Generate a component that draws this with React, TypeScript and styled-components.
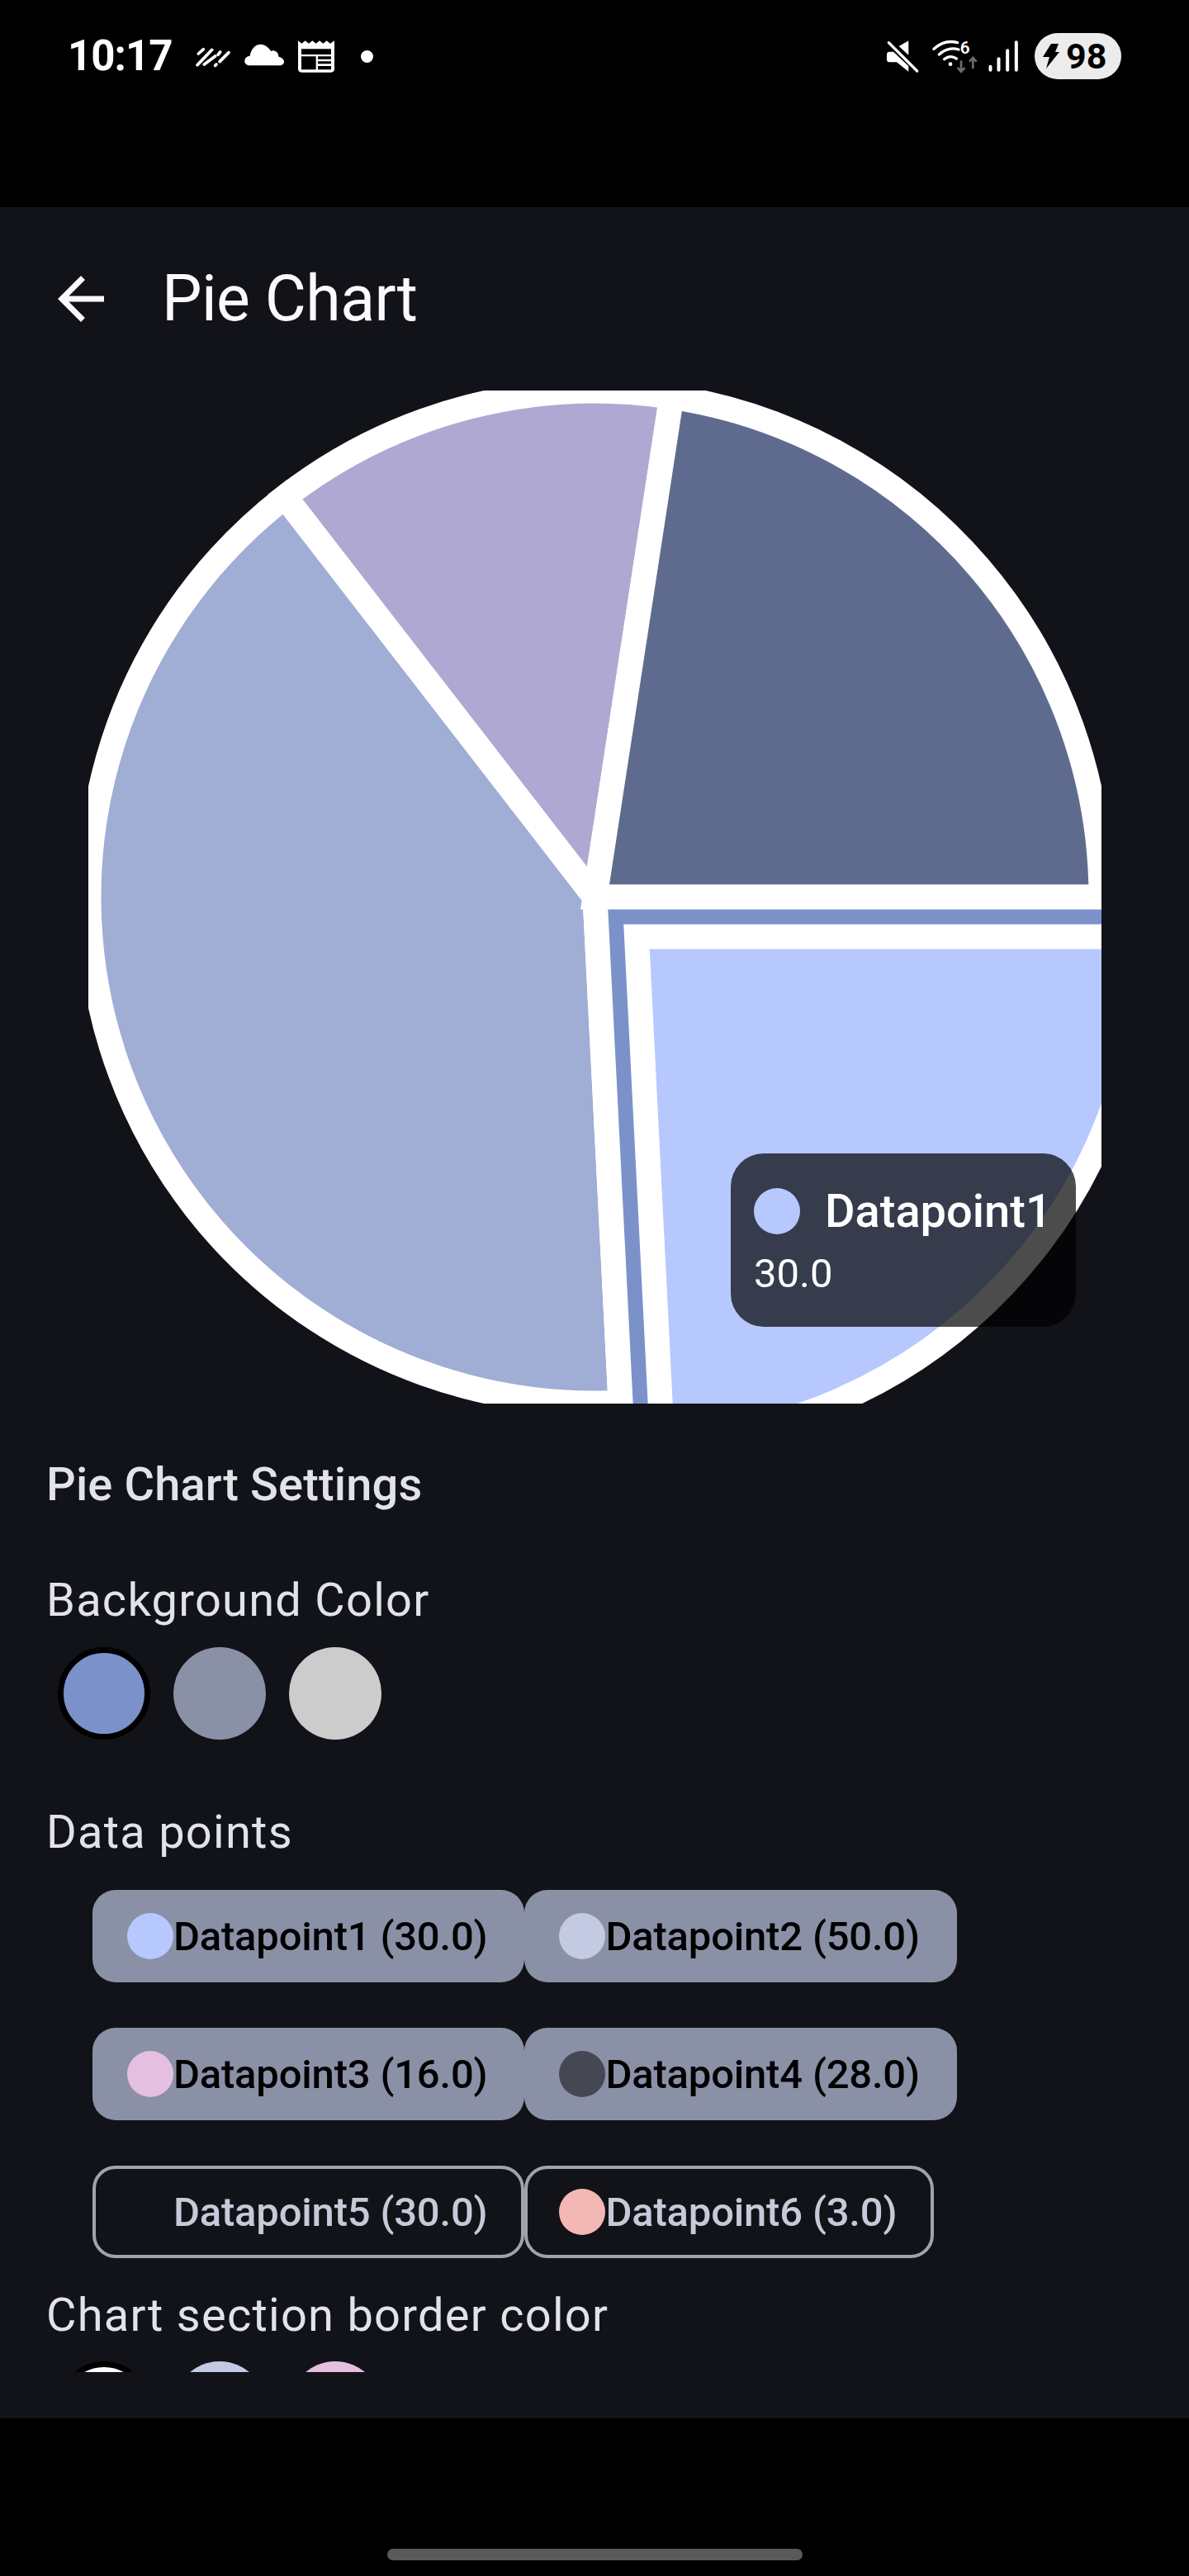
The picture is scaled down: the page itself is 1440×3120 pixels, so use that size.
import styled, { createGlobalStyle } from 'styled-components';

const GlobalStyle = createGlobalStyle`
  html, body {
    margin: 0;
    background: #000;
    font-family: Roboto, "Liberation Sans", sans-serif;
  }
`

const Screen = styled.div`
  width: 1440px;
  height: 3120px;
  display: flex;
  flex-direction: column;
  background: #000;
`

const StatusBar = styled.div`
  height: 136px;
  margin-bottom: 115px;
  padding: 0 82px 0 82px;
  display: flex;
  align-items: center;
  justify-content: space-between;
  color: #fff;
`

const StatusGroup = styled.div`
  display: flex;
  align-items: center;
`

const Time = styled.span`
  width: 128px;
  font-size: 51px;
  font-weight: 700;
  letter-spacing: -1px;
  line-height: 60px;
`

const StatusIcon = styled.svg<{ $left: number }>`
  display: block;
  height: 40px;
  margin-left: ${p => p.$left}px;
  fill: #fff;
  overflow: visible;
`

const NoticeDot = styled.span`
  width: 15px;
  height: 15px;
  margin-left: 32px;
  border-radius: 50%;
  background: #fff;
`

const Battery = styled.div`
  width: 105px;
  height: 56px;
  margin-left: 19px;
  padding-left: 10px;
  box-sizing: border-box;
  display: flex;
  align-items: center;
  border-radius: 28px;
  background: #ececec;
  color: #000;
  font-size: 43px;
  font-weight: 700;
`

const BatteryBolt = styled.svg`
  width: 20px;
  height: 30px;
  margin-right: 8px;
  fill: #000;
`

const Panel = styled.div`
  height: 2678px;
  background: #111318;
`

const Scroller = styled.div`
  height: 2622px;
  overflow: hidden;
`

const TopBar = styled.div`
  height: 222px;
  padding-left: 56px;
  display: flex;
  align-items: center;
`

const BackIcon = styled.svg`
  width: 84px;
  height: 84px;
  fill: #fcf8ff;
`

const Title = styled.h1`
  margin: 0 0 0 56px;
  font-size: 77px;
  font-weight: 400;
  letter-spacing: -0.6px;
  line-height: 98px;
  color: #fcf8ff;
`

const ChartBox = styled.div`
  position: relative;
  width: 1227px;
  height: 1227px;
  margin-left: 107px;
  overflow: hidden;
`

const ChartSvg = styled.svg`
  display: block;
  width: 1227px;
  height: 1227px;
`

const Tooltip = styled.div`
  position: absolute;
  left: 778px;
  top: 924px;
  width: 418px;
  height: 210px;
  padding: 42px 0 0 28px;
  box-sizing: border-box;
  border-radius: 40px;
  background: rgba(0, 0, 0, 0.7);
  color: #fff;
`

const TooltipRow = styled.div`
  display: flex;
  align-items: center;
  gap: 30px;
  font-size: 56px;
  font-weight: 500;
  line-height: 56px;
`

const TooltipValue = styled.div`
  margin-top: 13px;
  font-size: 49px;
  line-height: 70px;
`

const Dot = styled.span<{ $color: string }>`
  flex: none;
  width: 56px;
  height: 56px;
  border-radius: 50%;
  background: ${p => p.$color};
`

const Settings = styled.div`
  padding-left: 56px;
  color: #e2e2e9;
`

const Heading = styled.h2`
  margin: 56px 0 0;
  font-size: 56px;
  font-weight: 500;
  line-height: 84px;
  letter-spacing: 0.15px;
`

const Label = styled.div<{ $top: number }>`
  margin-top: ${p => p.$top}px;
  font-size: 56px;
  line-height: 84px;
  letter-spacing: 1.25px;
`

const SwatchRow = styled.div<{ $top: number }>`
  display: flex;
  gap: 28px;
  margin: ${p => p.$top}px 0 0 14px;
`

const Swatch = styled.div<{ $color: string; $selected?: boolean }>`
  width: 112px;
  height: 112px;
  box-sizing: border-box;
  border-radius: 50%;
  background: ${p => p.$color};
  border: ${p => (p.$selected ? '7px solid #000' : 'none')};
`

const ChipFlow = styled.div`
  display: flex;
  flex-wrap: wrap;
  row-gap: 55px;
  width: 1216px;
  margin: 28px 0 0 56px;
`

const Chip = styled.div<{ $on: boolean }>`
  height: 112px;
  padding: ${p => (p.$on ? '0 45px 0 42px' : '0 41px 0 38px')};
  box-sizing: border-box;
  display: flex;
  align-items: center;
  border-radius: 28px;
  background: ${p => (p.$on ? '#8a90a6' : 'transparent')};
  border: ${p => (p.$on ? 'none' : '4px solid #a2a2ad')};
  color: ${p => (p.$on ? '#000' : '#c8c9d8')};
  font-size: 49px;
  font-weight: 500;
  letter-spacing: -0.2px;
`

const NavArea = styled.div`
  height: 191px;
  padding-top: 158px;
  box-sizing: border-box;
  display: flex;
  justify-content: center;
`

const NavPill = styled.div`
  width: 503px;
  height: 14px;
  border-radius: 7px;
  background: #5a5a5a;
`

const chips = [
  { name: 'Datapoint1', value: '30.0', color: '#b7c8ff', on: true },
  { name: 'Datapoint2', value: '50.0', color: '#c5cae3', on: true },
  { name: 'Datapoint3', value: '16.0', color: '#e5bfe0', on: true },
  { name: 'Datapoint4', value: '28.0', color: '#454852', on: true },
  { name: 'Datapoint5', value: '30.0', color: 'transparent', on: false },
  { name: 'Datapoint6', value: '3.0', color: '#f4b8b4', on: false },
]

const slicePath = (cx: number, cy: number, r: number, from: number, to: number) => {
  const a = (from * Math.PI) / 180
  const b = (to * Math.PI) / 180
  const large = to - from > 180 ? 1 : 0
  return `M${cx} ${cy}L${cx + r * Math.cos(a)} ${cy + r * Math.sin(a)}A${r} ${r} 0 ${large} 1 ${cx + r * Math.cos(b)} ${cy + r * Math.sin(b)}Z`
}

const total = 124
const angle = (v: number) => (v / total) * 360
const a1 = angle(30)
const a2 = a1 + angle(50)
const a3 = a2 + angle(16)

const PieChart = () => (
  <ChartSvg viewBox="0 0 1227 1227">
    <g stroke="#fff" strokeWidth={30}>
      <path d={slicePath(613.5, 613.5, 613, a1, a2)} fill="#a0add5" />
      <path d={slicePath(613.5, 613.5, 613, a2, a3)} fill="#afa8d3" />
      <path d={slicePath(613.5, 613.5, 613, a3, 360)} fill="#5f6b8e" />
      <path d={slicePath(613.5, 613.5, 640, 0, a1)} fill="#7a92c9" />
      <path d={slicePath(664, 661.5, 613, 0, a1)} fill="#b7c8ff" />
    </g>
  </ChartSvg>
)

const App = () => (
  <Screen>
    <GlobalStyle />
    <StatusBar>
      <StatusGroup>
        <Time>10:17</Time>
        <StatusIcon $left={27} viewBox="21 24 126 120" width={42}>
          <g stroke="#fff" strokeWidth={11} strokeLinecap="round" fill="none">
            <path d="M31 75L49 59" />
            <path d="M27 116L80 61" />
            <path d="M52 114L92 84" />
            <path d="M102 79L110 69" />
            <path d="M92 118L96 114" />
            <path d="M108 104L141 71" />
          </g>
        </StatusIcon>
        <StatusIcon $left={17} viewBox="198 24 144 120" width={48}>
          <path d="M218 118C205 118 198 110 199 100C200 90 208 84 218 83C222 58 238 40 258 41C275 42 288 55 295 66C302 62 312 64 318 72C322 78 322 84 322 86C333 88 342 96 342 104C342 112 334 118 325 118Z" />
        </StatusIcon>
        <StatusIcon $left={17} viewBox="395 24 132 120" width={44}>
          <path
            fillRule="evenodd"
            d="M395 28L408 38L421 28L434 38L447 28L460 38L473 28L486 38L499 28L512 38L527 28V130Q527 143 514 143H408Q395 143 395 130ZM407 58V78H515V58ZM407 85V133H460V85ZM467 85V95H515V85ZM467 103V112H515V103ZM467 120V133H515V120Z"
          />
        </StatusIcon>
        <NoticeDot />
      </StatusGroup>
      <StatusGroup>
        <StatusIcon $left={0} viewBox="23 36 120 120" width={40}>
          <path d="M105 40V92L70 60Z" />
          <path d="M36 80H50L105 132V152L62 118H36Q26 118 26 108V90Q26 80 36 80Z" />
          <path d="M33 47L136 150" stroke="#fff" strokeWidth={10} strokeLinecap="round" />
        </StatusIcon>
        <StatusIcon $left={17} viewBox="195 36 165 120" width={55}>
          <g stroke="#fff" strokeWidth={10} strokeLinecap="round" fill="none">
            <path d="M198 70Q238 34 284 47" />
            <path d="M217 90Q250 60 288 72" />
            <path d="M236 107Q258 90 280 105" />
          </g>
          <circle cx={258} cy={125} r={7} />
          <text x={293} y={87} fontSize={62} fontWeight={600} fontFamily="Roboto, sans-serif" fill="#fff">6</text>
          <g stroke="#6b6b6b" strokeWidth={8} fill="none">
            <path d="M297 112V150M284 138L297 152L310 138" />
            <path d="M340 142V104M327 116L340 102L353 116" />
          </g>
        </StatusIcon>
        <StatusIcon $left={12} viewBox="396 36 110 120" width={37}>
          <rect x={397} y={128} width={12} height={24} rx={6} />
          <rect x={427} y={100} width={12} height={52} rx={6} />
          <rect x={459} y={70} width={12} height={82} rx={6} />
          <rect x={491} y={40} width={12} height={112} rx={6} />
        </StatusIcon>
        <Battery>
          <BatteryBolt viewBox="0 0 20 30">
            <path d="M10 0H19L15 10H20L4 30L8 16H0Z" />
          </BatteryBolt>
          98
        </Battery>
      </StatusGroup>
    </StatusBar>

    <Panel>
      <Scroller>
        <TopBar>
          <BackIcon viewBox="0 0 24 24">
            <path d="M20 11H7.83l5.59-5.59L12 4l-8 8 8 8 1.41-1.41L7.83 13H20v-2z" />
          </BackIcon>
          <Title>Pie Chart</Title>
        </TopBar>

        <ChartBox>
          <PieChart />
          <Tooltip>
            <TooltipRow>
              <Dot $color="#b7c8ff" />
              Datapoint1
            </TooltipRow>
            <TooltipValue>30.0</TooltipValue>
          </Tooltip>
        </ChartBox>

        <Settings>
          <Heading>Pie Chart Settings</Heading>
          <Label $top={56}>Background Color</Label>
          <SwatchRow $top={15}>
            <Swatch $color="#7a92c9" $selected />
            <Swatch $color="#8a90a6" />
            <Swatch $color="#cccccc" />
          </SwatchRow>
          <Label $top={70}>Data points</Label>
          <ChipFlow>
            {chips.map(c => (
              <Chip key={c.name} $on={c.on}>
                <Dot $color={c.color} />
                {c.name} ({c.value})
              </Chip>
            ))}
          </ChipFlow>
          <Label $top={27}>Chart section border color</Label>
          <SwatchRow $top={14}>
            <Swatch $color="#fff" $selected />
            <Swatch $color="#c5cae3" />
            <Swatch $color="#e5bfe0" />
          </SwatchRow>
        </Settings>
      </Scroller>
    </Panel>

    <NavArea>
      <NavPill />
    </NavArea>
  </Screen>
)

export default App
